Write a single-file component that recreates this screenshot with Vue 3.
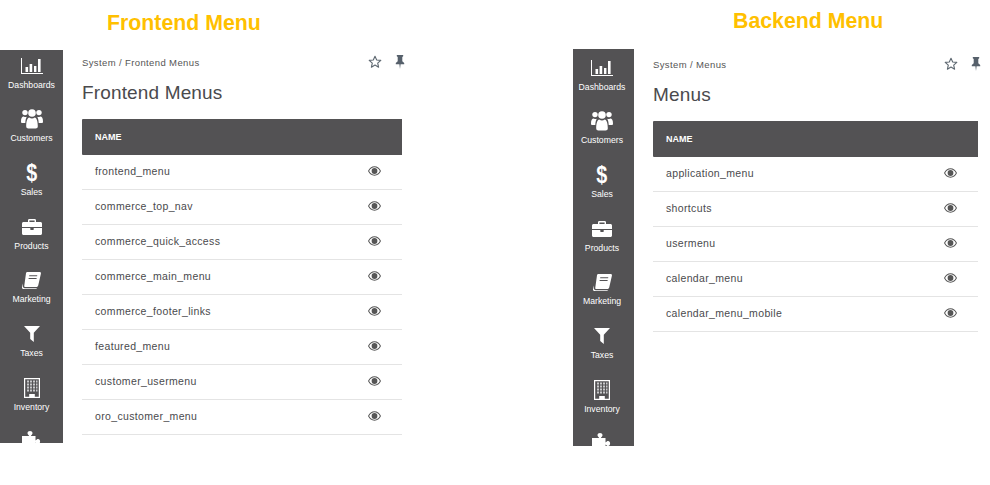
<script setup>
const navItems = [
  { label: 'Dashboards', icon: 'chart' },
  { label: 'Customers', icon: 'users' },
  { label: 'Sales', icon: 'dollar' },
  { label: 'Products', icon: 'briefcase' },
  { label: 'Marketing', icon: 'book' },
  { label: 'Taxes', icon: 'filter' },
  { label: 'Inventory', icon: 'building' },
  { label: '', icon: 'puzzle' },
]

const panels = [
  {
    key: 'frontend',
    heading: 'Frontend Menu',
    crumb: 'System / Frontend Menus',
    title: 'Frontend Menus',
    rows: [
      'frontend_menu',
      'commerce_top_nav',
      'commerce_quick_access',
      'commerce_main_menu',
      'commerce_footer_links',
      'featured_menu',
      'customer_usermenu',
      'oro_customer_menu',
    ],
  },
  {
    key: 'backend',
    heading: 'Backend Menu',
    crumb: 'System / Menus',
    title: 'Menus',
    rows: ['application_menu', 'shortcuts', 'usermenu', 'calendar_menu', 'calendar_menu_mobile'],
  },
]
</script>

<template>
  <div class="page">
    <section v-for="panel in panels" :key="panel.key" class="panel" :class="panel.key">
      <h2 class="heading">{{ panel.heading }}</h2>
      <div class="shell">
        <nav class="sidebar">
          <div v-for="item in navItems" :key="item.icon" class="nav-item">
            <span class="nav-icon">
              <svg v-if="item.icon === 'chart'" viewBox="0 0 22 16" width="22" height="16">
                <path fill="#fff" d="M0 0h1v15h22v1H0z" />
                <path fill="#fff" d="M4.500 9h2.600v5H4.500zM8.600 6h2.600v8H8.600zM13 8h2.400v6H13zM17 1h2.600v13H17z" />
              </svg>
              <svg v-else-if="item.icon === 'users'" viewBox="0 0 22 20" width="22" height="20">
                <g fill="#fff">
                  <circle cx="4" cy="3.600" r="2.700" />
                  <circle cx="18" cy="3.600" r="2.700" />
                  <circle cx="11" cy="4" r="3.800" />
                  <path d="M0 12.400c0-3.400 1-5 2.800-5 .9.7 1.900.8 3 .4-.6 1.100-1.400 2.700-1.500 6.200H1.300C.500 14 0 13.400 0 12.400zM22 12.400c0-3.400-1-5-2.800-5-.9.7-1.900.8-3 .4.6 1.100 1.400 2.700 1.500 6.200h3C21.500 14 22 13.400 22 12.400z" />
                  <path d="M5.200 17.300c0-5.300 1.300-8.900 3-8.900 1.800 1.300 3.800 1.300 5.600 0 1.700 0 3 3.600 3 8.900 0 1.500-.9 2.200-2.200 2.200H7.400c-1.300 0-2.200-.7-2.200-2.200z" />
                </g>
              </svg>
              <span v-else-if="item.icon === 'dollar'" class="dollar">$</span>
              <svg v-else-if="item.icon === 'briefcase'" viewBox="0 0 20 16" width="20" height="16">
                <path fill="#fff" fill-rule="evenodd" d="M6 3V1.300C6 .6 6.600 0 7.300 0h5.400C13.400 0 14 .6 14 1.300V3h4.500c.8 0 1.500.7 1.500 1.500V8H0V4.500C0 3.700.7 3 1.500 3zm1.400 0h5.200V1.400H7.400z" />
                <path fill="#fff" d="M0 9h8.300v1.500c0 .3.2.5.5.5h2.400c.3 0 .5-.2.5-.5V9H20v5.500c0 .8-.7 1.500-1.500 1.500h-17C.7 16 0 15.300 0 14.500z" />
              </svg>
              <svg v-else-if="item.icon === 'book'" viewBox="0 0 19 17" width="19" height="17">
                <path fill="#fff" fill-rule="evenodd" d="M5.500 0H17.500c1 0 1.600.7 1.400 1.700l-2.700 11.800c-.2.900-.9 1.500-1.800 1.500H3.300c-.9 0-1.200-.8-1-1.500L4 1.300C4.200.5 4.700 0 5.500 0zM7.300 3.300l-.2 1h8l.2-1zM6.700 6l-.2 1h8l.2-1z" />
                <path fill="#fff" d="M1 11.500 0 15c-.2 1.100.5 2 1.700 2h12.100c.6 0 1.100-.3 1.400-.7H2.800C1.200 16.300.5 14.800 1 13.500z" />
              </svg>
              <svg v-else-if="item.icon === 'filter'" viewBox="0 0 16 16" width="16" height="16">
                <path fill="#fff" d="M0 0h16L9.800 6.800V16L6.200 13V6.800z" />
              </svg>
              <svg v-else-if="item.icon === 'building'" viewBox="0 0 16 20" width="16" height="20">
                <path fill="#fff" fill-rule="evenodd" d="M0 0h16v20H0zM1.200 1.200v17.600h4V16h5.600v2.800h4V1.200z" />
                <path fill="#c9c9cb" d="M3 2.500h2v2H3zM6 2.500h2v2H6zM9 2.500h2v2H9zM12 2.500h1.500v2H12zM3 5.500h2v2H3zM6 5.500h2v2H6zM9 5.500h2v2H9zM12 5.500h1.500v2H12zM3 8.500h2v2H3zM6 8.500h2v2H6zM9 8.500h2v2H9zM12 8.500h1.500v2H12zM3 11.500h2v2H3zM6 11.500h2v2H6zM9 11.500h2v2H9zM12 11.500h1.500v2H12z" />
              </svg>
              <svg v-else viewBox="0 0 20 20" width="20" height="20">
                <path fill="#fff" d="M7 4.500C6 3.700 5.500 3 5.500 2 5.500.8 6.600 0 8 0s2.500.8 2.500 2c0 1-.5 1.700-1.500 2.500V5h4.500v4.500c1-.9 1.600-1.500 2.600-1.500 1.200 0 2 1.100 2 2.500s-.8 2.500-2 2.500c-1 0-1.600-.6-2.600-1.500V20H0V5h7z" />
              </svg>
            </span>
            <span class="nav-label">{{ item.label }}</span>
          </div>
        </nav>

        <main class="content">
          <div class="toolbar">
            <span class="crumb">{{ panel.crumb }}</span>
            <div class="actions">
              <svg viewBox="0 0 14 14" width="14" height="14">
                <path fill="none" stroke="#5d6770" stroke-width="1.100" stroke-linejoin="round" d="M7 1.200 8.700 5l4.100.4-3.100 2.700.9 4.100L7 10.100l-3.600 2.100.9-4.100L1.200 5.400 5.300 5z" />
              </svg>
              <svg viewBox="0 0 10 14" width="10" height="14">
                <path fill="#56606b" d="M1.800 0h6.400v1.200L7.300 2v4.200L9.200 8v1.200H5.600L5 14l-.6-4.800H.8V8l1.900-1.800V2l-.9-.8z" />
              </svg>
            </div>
          </div>
          <h1 class="title">{{ panel.title }}</h1>
          <div class="table">
            <div class="table-head">NAME</div>
            <div v-for="row in panel.rows" :key="row" class="table-row">
              <span>{{ row }}</span>
              <svg viewBox="0 0 14 10" width="13" height="10">
                <path fill="#555" fill-rule="evenodd" d="M7 0c3 0 5.500 1.800 7 5-1.500 3.200-4 5-7 5S1.500 8.200 0 5c1.500-3.200 4-5 7-5zM7 1C4.700 1 2.700 2.300 1.200 5 2.700 7.700 4.700 9 7 9s4.300-1.300 5.800-4C11.300 2.300 9.300 1 7 1z" />
                <circle cx="7" cy="5" r="3.100" fill="#555" />
              </svg>
            </div>
          </div>
        </main>
      </div>
    </section>
  </div>
</template>

<style>
body {
  background: #fff;
}
</style>

<style scoped>
.page {
  display: flex;
  width: 990px;
  height: 485px;
  overflow: hidden;
  font-family: 'Liberation Sans', Arial, sans-serif;
}

.panel {
  display: flex;
  flex-direction: column;
}

.frontend {
  width: 573px;
}

.backend {
  width: 417px;
}

.heading {
  margin: 0;
  font-size: 21.3px;
  line-height: 24px;
  font-weight: 700;
  color: #ffc000;
}

.frontend .heading {
  margin: 11px 0 15px 107px;
}

.backend .heading {
  margin: 9px 0 16px 160px;
}

.shell {
  display: flex;
}

.sidebar {
  flex: none;
  box-sizing: border-box;
  display: flex;
  flex-direction: column;
  overflow: hidden;
  background: #535254;
}

.frontend .sidebar {
  width: 63px;
  height: 393px;
}

.backend .sidebar {
  width: 61px;
  height: 397px;
  padding: 3px 3px 0 0;
}

.nav-item {
  flex: none;
  height: 53.7px;
  display: flex;
  flex-direction: column;
  align-items: center;
  color: #fff;
}

.nav-icon {
  height: 29px;
  margin-top: 1px;
  display: flex;
  align-items: center;
  justify-content: center;
}

.dollar {
  display: inline-block;
  font-size: 24px;
  line-height: 29px;
  font-weight: 700;
  transform: scaleX(0.82);
}

.nav-label {
  font-size: 8.7px;
  line-height: 12px;
  margin-top: -1.5px;
}

.content {
  margin-left: 19px;
}

.backend .content {
  width: 325px;
  padding-top: 3px;
}

.frontend .content {
  width: 320px;
}

.toolbar {
  display: flex;
  align-items: center;
  justify-content: space-between;
  height: 24px;
}

.crumb {
  font-size: 9.5px;
  letter-spacing: 0.38px;
  color: #555;
}

.actions {
  display: flex;
  align-items: center;
  gap: 13px;
  margin-right: -3px;
}

.title {
  margin: 8px 0 0;
  font-size: 19px;
  line-height: 22px;
  letter-spacing: 0.15px;
  font-weight: 400;
  color: #4a4a4d;
}

.table {
  margin-top: 15px;
}

.table-head {
  height: 36px;
  padding-left: 13px;
  display: flex;
  align-items: center;
  font-size: 9px;
  font-weight: 700;
  color: #fff;
  background: #535254;
  border-radius: 1px 0 0 1px;
}

.table-row {
  box-sizing: border-box;
  height: 35px;
  padding: 0 21px 2px 13px;
  display: flex;
  align-items: center;
  justify-content: space-between;
  font-size: 10.5px;
  letter-spacing: 0.35px;
  color: #4a4a4d;
  border-bottom: 1px solid #e4e4e4;
}
</style>
